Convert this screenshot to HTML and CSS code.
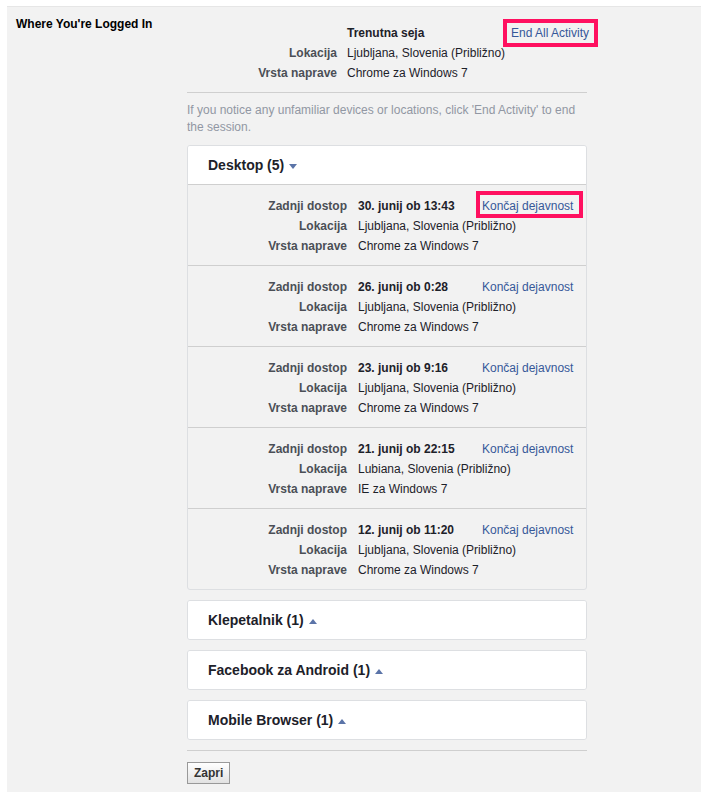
FILE: index.html
```html
<!DOCTYPE html>
<html>
<head>
<meta charset="utf-8">
<link rel="stylesheet" href="styles.css">
</head>
<body>
<div class="panel">
  <div class="title">Where You're Logged In</div>
  <div class="main">
    <div class="current">
      <div class="lbl"></div><div class="val strong">Trenutna seja</div><div class="act"><a class="link boxed top-box">End All Activity</a></div>
      <div class="lbl">Lokacija</div><div class="val">Ljubljana, Slovenia (Približno)</div><div class="act"></div>
      <div class="lbl">Vrsta naprave</div><div class="val">Chrome za Windows 7</div><div class="act"></div>
    </div>
    <div class="divider"></div>
    <p class="help">If you notice any unfamiliar devices or locations, click 'End Activity' to end the session.</p>

    <div class="card">
      <div class="card-head">Desktop (5) <span class="arrow down"></span></div>
      <div class="row">
        <div class="lbl">Zadnji dostop</div><div class="val strong">30. junij ob 13:43</div><div class="act"><a class="link boxed row-box">Končaj dejavnost</a></div>
        <div class="lbl">Lokacija</div><div class="val">Ljubljana, Slovenia (Približno)</div><div></div>
        <div class="lbl">Vrsta naprave</div><div class="val">Chrome za Windows 7</div><div></div>
      </div>
      <div class="row">
        <div class="lbl">Zadnji dostop</div><div class="val strong">26. junij ob 0:28</div><div class="act"><a class="link">Končaj dejavnost</a></div>
        <div class="lbl">Lokacija</div><div class="val">Ljubljana, Slovenia (Približno)</div><div></div>
        <div class="lbl">Vrsta naprave</div><div class="val">Chrome za Windows 7</div><div></div>
      </div>
      <div class="row">
        <div class="lbl">Zadnji dostop</div><div class="val strong">23. junij ob 9:16</div><div class="act"><a class="link">Končaj dejavnost</a></div>
        <div class="lbl">Lokacija</div><div class="val">Ljubljana, Slovenia (Približno)</div><div></div>
        <div class="lbl">Vrsta naprave</div><div class="val">Chrome za Windows 7</div><div></div>
      </div>
      <div class="row">
        <div class="lbl">Zadnji dostop</div><div class="val strong">21. junij ob 22:15</div><div class="act"><a class="link">Končaj dejavnost</a></div>
        <div class="lbl">Lokacija</div><div class="val">Lubiana, Slovenia (Približno)</div><div></div>
        <div class="lbl">Vrsta naprave</div><div class="val">IE za Windows 7</div><div></div>
      </div>
      <div class="row">
        <div class="lbl">Zadnji dostop</div><div class="val strong">12. junij ob 11:20</div><div class="act"><a class="link">Končaj dejavnost</a></div>
        <div class="lbl">Lokacija</div><div class="val">Ljubljana, Slovenia (Približno)</div><div></div>
        <div class="lbl">Vrsta naprave</div><div class="val">Chrome za Windows 7</div><div></div>
      </div>
    </div>

    <div class="card collapsed">
      <div class="card-head">Klepetalnik (1) <span class="arrow up"></span></div>
    </div>
    <div class="card collapsed">
      <div class="card-head">Facebook za Android (1) <span class="arrow up"></span></div>
    </div>
    <div class="card collapsed">
      <div class="card-head">Mobile Browser (1) <span class="arrow up"></span></div>
    </div>

    <div class="divider bottom"></div>
    <button class="btn">Zapri</button>
  </div>
</div>
</body>
</html>
```

FILE: styles.css
```css
html, body {
  margin: 0;
  padding: 0;
  background: #fff;
  overflow: hidden;
}
body {
  font-family: "Liberation Sans", Arial, sans-serif;
  font-size: 12px;
  color: #1d2129;
}
.panel {
  box-sizing: border-box;
  margin: 6px 0 0 7px;
  border-top: 1px solid #e6e6e6;
  background: #f2f2f2;
  padding: 9px 9px 0 9px;
  display: grid;
  grid-template-columns: 171px 400px;
  height: calc(100vh - 6px);
  align-content: start;
}
.title {
  font-weight: bold;
  line-height: 16px;
  color: #000;
}
.main {
  padding-top: 7px;
}
.current {
  display: grid;
  grid-template-columns: 150px 154px 1fr;
  column-gap: 10px;
  line-height: 20px;
}
.lbl {
  text-align: right;
  font-weight: bold;
  color: #4b4f56;
  white-space: nowrap;
}
.val {
  color: #1d2129;
  white-space: nowrap;
}
.strong {
  font-weight: bold;
}
.act {
  white-space: nowrap;
}
.link {
  color: #365899;
  text-decoration: none;
  position: relative;
}
.boxed::after {
  content: "";
  position: absolute;
  border: 4px solid #ff1060;
}
.top-box::after {
  left: -8px;
  right: -9px;
  top: -7px;
  bottom: -7px;
}
.row-box::after {
  left: -6px;
  right: -10px;
  top: -8px;
  bottom: -5px;
}
.divider {
  border-top: 1px solid #cfcfcf;
  margin-top: 9px;
}
.help {
  margin: 9px 0 0 0;
  color: #9197a3;
  line-height: 17px;
}
.card {
  margin-top: 9px;
  background: #f2f2f2;
  border: 1px solid #dddfe2;
  border-radius: 3px;
  overflow: hidden;
}
.card.collapsed {
  margin-top: 10px;
}
.card-head {
  background: #fff;
  height: 38px;
  padding-left: 20px;
  display: flex;
  align-items: center;
  font-size: 14px;
  font-weight: bold;
  color: #1d2129;
  white-space: pre;
}
.card .card-head {
  border-bottom: 1px solid #cfcfcf;
}
.card.collapsed .card-head {
  border-bottom: none;
}
.arrow {
  display: inline-block;
  width: 0;
  height: 0;
  border-left: 4px solid transparent;
  border-right: 4px solid transparent;
  margin-left: 1px;
  margin-top: 3px;
}
.arrow.down {
  border-top: 5px solid #5b74a8;
}
.arrow.up {
  border-bottom: 5px solid #5b74a8;
}
.row {
  display: grid;
  grid-template-columns: 159px 113px 1fr;
  column-gap: 11px;
  line-height: 20px;
  padding: 11px 0 9px 0;
  border-bottom: 1px solid #cfcfcf;
}
.row:last-child {
  border-bottom: none;
}
.divider.bottom {
  margin-top: 10px;
}
.btn {
  margin-top: 11px;
  height: 22px;
  padding: 0 6px;
  font-family: "Liberation Sans", Arial, sans-serif;
  font-size: 12px;
  font-weight: bold;
  color: #333;
  background: linear-gradient(#ffffff, #e2e2e2);
  border: 1px solid #999;
  border-radius: 0;
}
```
